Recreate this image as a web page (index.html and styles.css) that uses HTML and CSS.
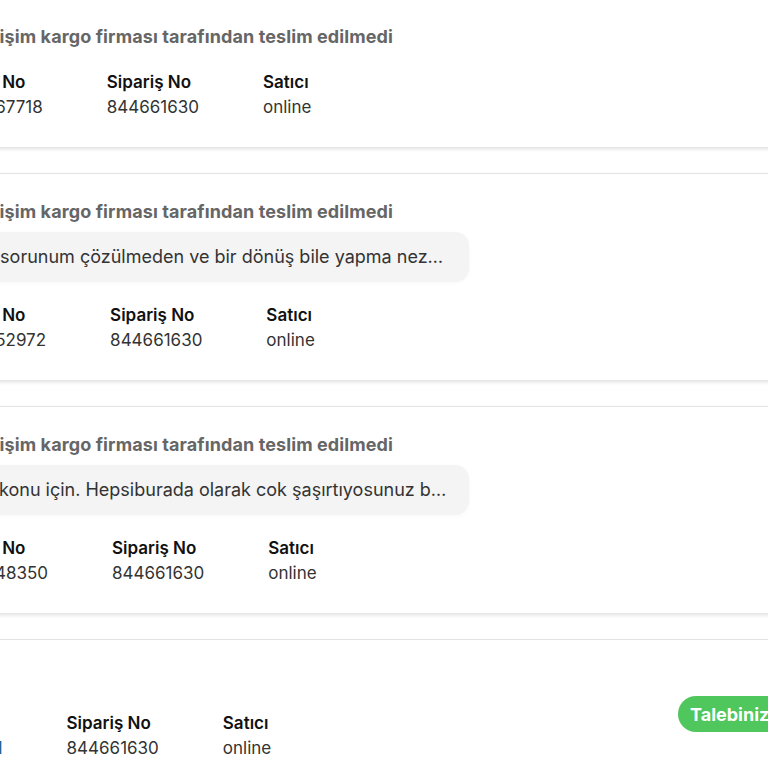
FILE: index.html
```html
<!DOCTYPE html>
<html lang="tr">
<head>
<meta charset="utf-8">
<title>Taleplerim</title>
<link rel="stylesheet" href="styles.css">
</head>
<body>
<div class="list">
  <section class="card">
    <h3 class="card-title">Siparişim kargo firması tarafından teslim edilmedi</h3>
    <div class="info">
      <div class="col"><span class="label">Talep No</span><span class="value">845267718</span></div>
      <div class="col"><span class="label">Sipariş No</span><span class="value">844661630</span></div>
      <div class="col"><span class="label">Satıcı</span><span class="value">online</span></div>
    </div>
  </section>
  <section class="card">
    <h3 class="card-title">Siparişim kargo firması tarafından teslim edilmedi</h3>
    <p class="bubble">Ne sorunum çözülmeden ve bir dönüş bile yapma nezaketinde bulunmadınız, çok üzgünüm</p>
    <div class="info">
      <div class="col"><span class="label">Talep No</span><span class="value">845252972</span></div>
      <div class="col"><span class="label">Sipariş No</span><span class="value">844661630</span></div>
      <div class="col"><span class="label">Satıcı</span><span class="value">online</span></div>
    </div>
  </section>
  <section class="card">
    <h3 class="card-title">Siparişim kargo firması tarafından teslim edilmedi</h3>
    <p class="bubble">Bir konu için. Hepsiburada olarak cok şaşırtıyosunuz beni, hiç beklemezdim</p>
    <div class="info">
      <div class="col"><span class="label">Talep No</span><span class="value">845248350</span></div>
      <div class="col"><span class="label">Sipariş No</span><span class="value">844661630</span></div>
      <div class="col"><span class="label">Satıcı</span><span class="value">online</span></div>
    </div>
  </section>
  <section class="card card-compact">
    <div class="row">
      <div class="info">
        <div class="col"><span class="label">Talep No</span><span class="value link">845244221</span></div>
        <div class="col"><span class="label">Sipariş No</span><span class="value">844661630</span></div>
        <div class="col"><span class="label">Satıcı</span><span class="value">online</span></div>
      </div>
      <span class="badge">Talebiniz çözüldü</span>
    </div>
  </section>
</div>
</body>
</html>
```
FILE: styles.css
```css
html, body {
  margin: 0;
  padding: 0;
  background: #ffffff;
  overflow: hidden;
}

body {
  font-family: Inter, "Noto Sans", sans-serif;
  color: #222;
}

.list {
  display: flex;
  flex-direction: column;
  gap: 26px;
  width: 1000px;
  margin: -2px 0 0 -100px;
}

.card {
  background: #fff;
  border-top: 1px solid #e3e3e3;
  box-shadow: 0 2px 4px rgba(0, 0, 0, 0.13);
  padding: 26px 0 27px 53px;
}

.card-title {
  margin: 0;
  font-size: 18px;
  line-height: 24px;
  font-weight: 700;
  letter-spacing: 0.1px;
  color: #666;
}

.bubble {
  margin: 8px 0 0 0;
  max-width: 480px;
  width: fit-content;
  box-sizing: content-box;
  padding: 13px 18px;
  background: #f4f4f5;
  border-radius: 14px;
  box-shadow: 0 1px 4px rgba(0, 0, 0, 0.03);
  font-size: 18px;
  line-height: 24px;
  color: #333;
  white-space: nowrap;
  overflow: hidden;
  text-overflow: ellipsis;
}

.info {
  display: flex;
  gap: 64px;
  margin-top: 21px;
}

.col {
  display: flex;
  flex-direction: column;
}

.label {
  font-size: 17px;
  line-height: 24px;
  font-weight: 600;
  color: #111;
}

.value {
  font-size: 17px;
  line-height: 26px;
  color: #333;
}

.value.link {
  color: #1c5d8f;
}

.card-compact {
  padding: 56px 0 40px 11px;
}

.row {
  display: grid;
  grid-template-columns: 767px auto;
  align-items: start;
}

.row .info {
  margin-top: 15px;
}

.badge {
  display: inline-flex;
  align-items: center;
  height: 36px;
  padding: 0 14px 0 12px;
  border-radius: 18px;
  background: #4fc75c;
  color: #fff;
  font-size: 18px;
  font-weight: 700;
  white-space: nowrap;
  justify-self: start;
}
```
